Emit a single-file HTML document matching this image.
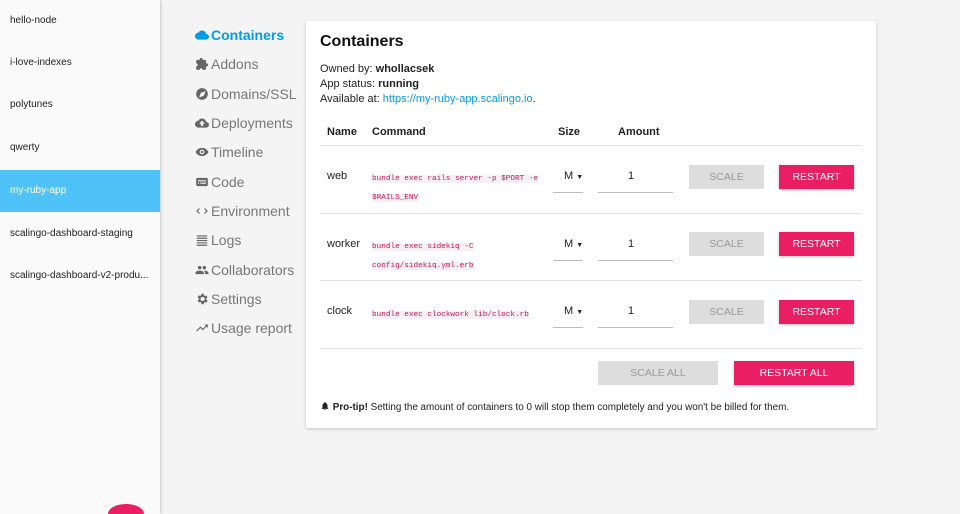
<!DOCTYPE html>
<html><head><meta charset="utf-8"><style>
*{box-sizing:border-box;margin:0;padding:0}
html,body{width:960px;height:514px;overflow:hidden}
body{background:#f4f4f4;font-family:"Liberation Sans",Arial,sans-serif;color:#222}
.wrap{position:relative;width:960px;height:514px;overflow:hidden}
.side{position:absolute;left:0;top:0;width:160px;height:514px;background:#fafafa;box-shadow:1px 0 3px rgba(0,0,0,.18);overflow:hidden}
.side div{position:absolute;left:0;width:160px;height:42px;line-height:42px;padding-left:10px;font-size:10px;color:#222;white-space:nowrap}
.side .sel{background:#4fc3f7;color:#fff}
.fab{position:absolute;left:108px;top:504px;width:36px;height:10px;border-radius:18px 18px 0 0/10px 10px 0 0;background:#e91e63}
.nav div{position:absolute;left:195px;font-size:14px;color:#777;height:20px;line-height:20px;white-space:nowrap}
.nav svg{width:14px;height:14px;vertical-align:-2px;margin-right:2px;fill:#666}
.nav .act{color:#039be5;font-weight:bold}
.nav .act svg{fill:#039be5}
.card{position:absolute;left:306px;top:21px;width:570px;height:407px;background:#fff;box-shadow:0 1px 3px rgba(0,0,0,.2)}
.a{position:absolute;white-space:nowrap}
.t{font-size:11px}
code{font-family:"Liberation Mono",monospace;font-size:7.7px;color:#c2185b;background:#f7f0f2;line-height:16px}
.line{position:absolute;left:14px;width:542px;height:1px;background:#e2e2e2}
.btn{position:absolute;height:24px;line-height:24px;text-align:center;font-size:10.5px}
.g{background:#ddd;color:#999}
.p{background:#e91e63;color:#fff;box-shadow:0 1px 3px rgba(0,0,0,.25)}
.ul{position:absolute;height:1px;background:#bbb}
</style></head><body><div class="wrap">
<div class="side">
<div style="top:0">hello-node</div>
<div style="top:42px">i-love-indexes</div>
<div style="top:84px">polytunes</div>
<div style="top:127px">qwerty</div>
<div class="sel" style="top:170px">my-ruby-app</div>
<div style="top:213px">scalingo-dashboard-staging</div>
<div style="top:255px">scalingo-dashboard-v2-produ...</div>
</div>
<div class="fab"></div>
<div class="nav">
<div class="act" style="top:25px"><svg viewBox="0 0 24 24"><path d="M19 10a7 7 0 0 0-13-2A6 6 0 0 0 6 20h13a5 5 0 0 0 0-10z"/></svg>Containers</div>
<div style="top:54px"><svg viewBox="0 0 24 24"><path d="M20 11h-1V7a2 2 0 0 0-2-2h-4V4a2.5 2.5 0 0 0-5 0v1H4a2 2 0 0 0-2 2v4h1a2.7 2.7 0 0 1 0 5H2v4a2 2 0 0 0 2 2h4v-1a2.7 2.7 0 0 1 5 0v1h4a2 2 0 0 0 2-2v-4h1a2.5 2.5 0 0 0 0-5z"/></svg>Addons</div>
<div style="top:84px"><svg viewBox="0 0 24 24"><path d="M12 2a10 10 0 1 0 0 20 10 10 0 0 0 0-20zm3 13-8 3 3-8 8-3z"/></svg>Domains/SSL</div>
<div style="top:113px"><svg viewBox="0 0 24 24"><path d="M19 10a7 7 0 0 0-13-2A6 6 0 0 0 6 20h13a5 5 0 0 0 0-10zm-5 3v4h-4v-4H7l5-5 5 5z"/></svg>Deployments</div>
<div style="top:142px"><svg viewBox="0 0 24 24"><path d="M12 5C7 5 3 8 1 12c2 4 6 7 11 7s9-3 11-7c-2-4-6-7-11-7zm0 11a4 4 0 1 1 0-8 4 4 0 0 1 0 8zm0-6a2 2 0 1 0 0 4 2 2 0 0 0 0-4z"/></svg>Timeline</div>
<div style="top:172px"><svg viewBox="0 0 24 24"><path d="M20 5H4a2 2 0 0 0-2 2v10a2 2 0 0 0 2 2h16a2 2 0 0 0 2-2V7a2 2 0 0 0-2-2zM7 15H5v-2h2zm12 0H9v-2h10zm0-4H5V9h14z"/></svg>Code</div>
<div style="top:201px"><svg viewBox="0 0 24 24"><path d="M7 7 2 12l5 5 1.4-1.4L4.8 12l3.6-3.6zm10 0-1.4 1.4 3.6 3.6-3.6 3.6L17 17l5-5z"/></svg>Environment</div>
<div style="top:230px"><svg viewBox="0 0 24 24"><path d="M3 4h18v2H3zm0 4h18v2H3zm0 4h18v2H3zm0 4h18v2H3zm0 4h18v2H3z"/></svg>Logs</div>
<div style="top:260px"><svg viewBox="0 0 24 24"><path d="M16 11a3 3 0 1 0 0-6 3 3 0 0 0 0 6zm-8 0a3 3 0 1 0 0-6 3 3 0 0 0 0 6zm0 2c-3 0-7 1-7 4v2h14v-2c0-3-4-4-7-4zm8 0h-1c1 1 2 2 2 4v2h6v-2c0-3-4-4-7-4z"/></svg>Collaborators</div>
<div style="top:289px"><svg viewBox="0 0 24 24"><path d="M19.4 13a7 7 0 0 0 0-2l2.1-1.6-2-3.5-2.5 1a7 7 0 0 0-1.7-1L15 3h-4l-.4 2.7a7 7 0 0 0-1.7 1l-2.5-1-2 3.5L6.6 11a7 7 0 0 0 0 2l-2.1 1.6 2 3.5 2.5-1a7 7 0 0 0 1.7 1L11 21h4l.4-2.7a7 7 0 0 0 1.7-1l2.5 1 2-3.5zM13 15.5a3.5 3.5 0 1 1 0-7 3.5 3.5 0 0 1 0 7z"/></svg>Settings</div>
<div style="top:318px"><svg viewBox="0 0 24 24"><path d="m16 6 2.3 2.3-4.9 4.9-4-4L2 16.6 3.4 18l6-6 4 4 6.3-6.3L22 12V6z"/></svg>Usage report</div>
</div>
<div class="card">
<div class="a" style="left:14px;top:12px;font-size:16px;font-weight:bold;color:#111">Containers</div>
<div class="a t" style="left:14px;top:42px">Owned by: <b>whollacsek</b></div>
<div class="a t" style="left:14px;top:57px">App status: <b>running</b></div>
<div class="a t" style="left:14px;top:72px">Available at: <span style="color:#039be5">https://my-ruby-app.scalingo.io</span>.</div>
<div class="a t" style="left:21px;top:105px;font-weight:bold">Name</div>
<div class="a t" style="left:66px;top:105px;font-weight:bold">Command</div>
<div class="a t" style="left:252px;top:105px;font-weight:bold">Size</div>
<div class="a t" style="left:312px;top:105px;font-weight:bold">Amount</div>
<div class="line" style="top:124px"></div>

<div class="a t" style="left:21px;top:149px">web</div>
<div class="a" style="left:66px;top:147px;width:172px;white-space:normal;line-height:16px"><code>bundle exec rails server -p $PORT -e $RAILS_ENV</code></div>
<div class="a t" style="left:258px;top:149px">M <span style="font-size:7px">▼</span></div><div class="ul" style="left:247px;top:171px;width:30px"></div>
<div class="a t" style="left:322px;top:149px">1</div><div class="ul" style="left:292px;top:171px;width:75px"></div>
<div class="btn g" style="left:383px;top:144px;width:75px">SCALE</div>
<div class="btn p" style="left:473px;top:144px;width:75px">RESTART</div>
<div class="line" style="top:192px"></div>

<div class="a t" style="left:21px;top:217px">worker</div>
<div class="a" style="left:66px;top:215px;width:120px;white-space:normal;line-height:16px"><code>bundle exec sidekiq -C config/sidekiq.yml.erb</code></div>
<div class="a t" style="left:258px;top:217px">M <span style="font-size:7px">▼</span></div><div class="ul" style="left:247px;top:239px;width:30px"></div>
<div class="a t" style="left:322px;top:217px">1</div><div class="ul" style="left:292px;top:239px;width:75px"></div>
<div class="btn g" style="left:383px;top:211px;width:75px">SCALE</div>
<div class="btn p" style="left:473px;top:211px;width:75px">RESTART</div>
<div class="line" style="top:259px"></div>

<div class="a t" style="left:21px;top:284px">clock</div>
<div class="a" style="left:66px;top:282px"><code>bundle exec clockwork lib/clock.rb</code></div>
<div class="a t" style="left:258px;top:284px">M <span style="font-size:7px">▼</span></div><div class="ul" style="left:247px;top:306px;width:30px"></div>
<div class="a t" style="left:322px;top:284px">1</div><div class="ul" style="left:292px;top:306px;width:75px"></div>
<div class="btn g" style="left:383px;top:279px;width:75px">SCALE</div>
<div class="btn p" style="left:473px;top:279px;width:75px">RESTART</div>
<div class="line" style="top:327px"></div>

<div class="btn g" style="left:292px;top:340px;width:120px">SCALE ALL</div>
<div class="btn p" style="left:428px;top:340px;width:120px">RESTART ALL</div>
<div class="a" style="left:14px;top:380px;font-size:9.9px"><svg viewBox="0 0 24 24" width="10" height="10" style="vertical-align:-1px"><path d="M12 22a2 2 0 0 0 2-2h-4a2 2 0 0 0 2 2zm6-6v-5c0-3-1.6-5.6-4.5-6.3V4a1.5 1.5 0 0 0-3 0v.7C7.6 5.4 6 8 6 11v5l-2 2v1h16v-1z" fill="#222"/></svg> <b>Pro-tip!</b> Setting the amount of containers to 0 will stop them completely and you won't be billed for them.</div>
</div>
</div></body></html>
